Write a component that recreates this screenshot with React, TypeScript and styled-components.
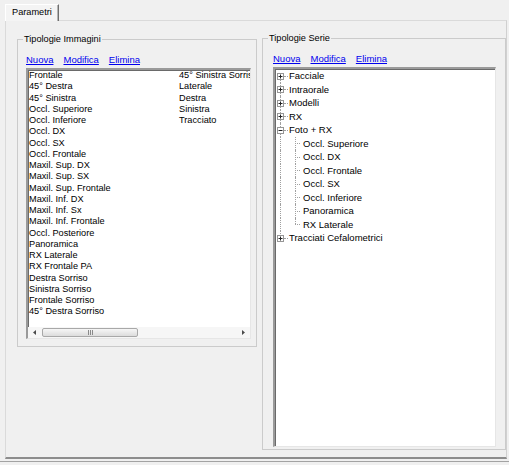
import React from 'react';
import styled, { createGlobalStyle } from 'styled-components';

const GlobalStyle = createGlobalStyle`
  html, body {
    margin: 0;
    padding: 0;
    background: #f0f0f0;
  }
  body {
    font-family: "Liberation Sans", Arial, sans-serif;
    color: #000;
  }
`;

const Window = styled.div`
  width: 509px;
  height: 465px;
  box-sizing: border-box;
  padding-top: 4px;
  background: #f0f0f0;
  overflow: hidden;
  display: flex;
  flex-direction: column;
`;

const TabStrip = styled.div`
  display: flex;
  height: 16px;
  margin-left: 5px;
  position: relative;
  z-index: 1;
`;

const Tab = styled.div`
  box-sizing: border-box;
  width: 54px;
  height: 17px;
  padding-left: 6px;
  background: #f4f4f4;
  border-top: 1px solid #ffffff;
  border-left: 1px solid #ffffff;
  border-right: 1px solid #6f6f6f;
  box-shadow: inset -1px 0 0 #b4b4b4;
  font-size: 9.2px;
  line-height: 15px;
`;

const TabPanel = styled.div`
  box-sizing: border-box;
  width: 502px;
  height: 439px;
  margin-left: 5px;
  padding: 12px 0 0 11px;
  border-style: solid;
  border-width: 1px 1px 2px 1px;
  border-color: #dadada #d0d0d0 #8d8d8d #dadada;
  display: flex;
  align-items: flex-start;
  gap: 5px;
`;

const BottomRule = styled.div`
  height: 1px;
  margin-top: 2px;
  background: #a3a3a3;
`;

const GroupBox = styled.fieldset<{ $width: number; $height: number; $padLeft: number; $shift?: number }>`
  box-sizing: border-box;
  width: ${p => p.$width}px;
  height: ${p => p.$height}px;
  margin: ${p => p.$shift ?? 0}px 0 0 0;
  padding: 9px 0 0 ${p => p.$padLeft}px;
  border: 1px solid #cbcbcb;
  min-width: 0;
  display: flex;
  flex-direction: column;
`;

const Caption = styled.legend<{ $padLeft: number }>`
  margin-left: ${p => 5 - p.$padLeft}px;
  padding: 0 1px;
  font-size: 9.2px;
  line-height: 12px;
`;

const LinkBar = styled.div`
  display: flex;
  gap: 10px;
  height: 12px;
  margin-bottom: 2px;
`;

const ActionLink = styled.a`
  font-size: 9.5px;
  line-height: 12px;
  color: #0000ee;
  text-decoration: underline;
  cursor: pointer;
`;

const SunkenBox = styled.div<{ $width: number; $height: number }>`
  box-sizing: border-box;
  width: ${p => p.$width}px;
  height: ${p => p.$height}px;
  background: #ffffff;
  border-style: solid;
  border-width: 2px 1px 1px 2px;
  border-color: #9a9a9a #e6e6e6 #e6e6e6 #9a9a9a;
  box-shadow: inset 1px 1px 0 #6a6a6a;
  display: flex;
  flex-direction: column;
  overflow: hidden;
`;

const ItemGrid = styled.ul`
  list-style: none;
  margin: 0;
  padding: 0 0 0 1px;
  flex: 1;
  display: grid;
  grid-template-rows: repeat(22, 11.25px);
  grid-auto-flow: column;
  grid-auto-columns: 150px;
  overflow: hidden;
  font-size: 9.2px;
`;

const Item = styled.li`
  line-height: 11.25px;
  white-space: nowrap;
`;

const HScroll = styled.div`
  flex: none;
  height: 11px;
  display: flex;
  align-items: center;
  background: #f6f6f6;
`;

const ScrollArrow = styled.div`
  width: 13px;
  height: 11px;
  display: flex;
  align-items: center;
  justify-content: center;
  flex: none;
`;

const Thumb = styled.div`
  box-sizing: border-box;
  width: 96px;
  height: 9px;
  margin-left: 1px;
  border: 1px solid #a8a8a8;
  border-radius: 2px;
  background: linear-gradient(#f6f6f6, #dcdcdc);
  display: flex;
  align-items: center;
  justify-content: center;
`;

const Track = styled.div`
  flex: 1;
`;

const TreeList = styled.div`
  font-size: 9.5px;
`;

const TreeRow = styled.div`
  display: flex;
  align-items: center;
  height: 13.5px;
`;

const Gutter = styled.span`
  position: relative;
  flex: none;
  width: 14px;
  height: 100%;
`;

const VLine = styled.span<{ $x: number; $top: boolean; $bottom: boolean }>`
  position: absolute;
  left: ${p => p.$x}px;
  top: ${p => (p.$top ? '0' : '50%')};
  bottom: ${p => (p.$bottom ? '0' : '50%')};
  border-left: 1px dotted #a0a0a0;
`;

const HLine = styled.span<{ $x: number; $len: number }>`
  position: absolute;
  left: ${p => p.$x}px;
  width: ${p => p.$len}px;
  top: 50%;
  border-top: 1px dotted #a0a0a0;
`;

const Expander = styled.svg<{ $x: number }>`
  position: absolute;
  left: ${p => p.$x - 3}px;
  top: calc(50% - 3px);
  display: block;
`;

const NodeLabel = styled.span`
  line-height: 13.5px;
  white-space: nowrap;
`;

const ImageTypes = [
  'Frontale', '45° Destra', '45° Sinistra', 'Occl. Superiore', 'Occl. Inferiore',
  'Occl. DX', 'Occl. SX', 'Occl. Frontale', 'Maxil. Sup. DX', 'Maxil. Sup. SX',
  'Maxil. Sup. Frontale', 'Maxil. Inf. DX', 'Maxil. Inf. Sx', 'Maxil. Inf. Frontale',
  'Occl. Posteriore', 'Panoramica', 'RX Laterale', 'RX Frontale PA', 'Destra Sorriso',
  'Sinistra Sorriso', 'Frontale Sorriso', '45° Destra Sorriso',
  '45° Sinistra Sorriso', 'Laterale', 'Destra', 'Sinistra', 'Tracciato',
];

interface SeriesNode {
  label: string;
  children?: string[];
}

const Series: SeriesNode[] = [
  { label: 'Facciale' },
  { label: 'Intraorale' },
  { label: 'Modelli' },
  { label: 'RX' },
  {
    label: 'Foto + RX',
    children: ['Occl. Superiore', 'Occl. DX', 'Occl. Frontale', 'Occl. SX', 'Occl. Inferiore', 'Panoramica', 'RX Laterale'],
  },
  { label: 'Tracciati Cefalometrici' },
];

const ExpandBox = ({ open }: { open: boolean }) => (
  <Expander $x={5} width="7" height="7" viewBox="0 0 7 7">
    <rect x="0.5" y="0.5" width="6" height="6" fill="#fff" stroke="#969696" />
    <line x1="1.5" y1="3.5" x2="5.5" y2="3.5" stroke="#222" />
    {!open && <line x1="3.5" y1="1.5" x2="3.5" y2="5.5" stroke="#222" />}
  </Expander>
);

const Actions = () => (
  <LinkBar>
    <ActionLink>Nuova</ActionLink>
    <ActionLink>Modifica</ActionLink>
    <ActionLink>Elimina</ActionLink>
  </LinkBar>
);

const App: React.FC = () => {
  const last = Series.length - 1;
  return (
    <>
      <GlobalStyle />
      <Window>
        <TabStrip>
          <Tab>Parametri</Tab>
        </TabStrip>
        <TabPanel>
          <GroupBox $width={240} $height={314} $padLeft={8}>
            <Caption $padLeft={8}>Tipologie Immagini</Caption>
            <Actions />
            <SunkenBox $width={225} $height={271}>
              <ItemGrid>
                {ImageTypes.map(t => (
                  <Item key={t}>{t}</Item>
                ))}
              </ItemGrid>
              <HScroll>
                <ScrollArrow>
                  <svg width="3" height="5" viewBox="0 0 3 5"><path d="M3 0 L0 2.5 L3 5 Z" fill="#4a4a4a" /></svg>
                </ScrollArrow>
                <Thumb>
                  <svg width="7" height="5" viewBox="0 0 7 5">
                    <path d="M1.5 0 V5 M3.5 0 V5 M5.5 0 V5" stroke="#8a8a8a" />
                  </svg>
                </Thumb>
                <Track />
                <ScrollArrow>
                  <svg width="3" height="5" viewBox="0 0 3 5"><path d="M0 0 L3 2.5 L0 5 Z" fill="#4a4a4a" /></svg>
                </ScrollArrow>
              </HScroll>
            </SunkenBox>
          </GroupBox>
          <GroupBox $width={244} $height={418} $padLeft={10} $shift={-1}>
            <Caption $padLeft={10}>Tipologie Serie</Caption>
            <Actions />
            <SunkenBox $width={223} $height={380}>
              <TreeList>
                {Series.map((n, i) => (
                  <React.Fragment key={n.label}>
                    <TreeRow>
                      <Gutter>
                        <VLine $x={5} $top={i > 0} $bottom={i < last} />
                        <HLine $x={9} $len={4} />
                        <ExpandBox open={!!n.children} />
                      </Gutter>
                      <NodeLabel>{n.label}</NodeLabel>
                    </TreeRow>
                    {n.children?.map((c, j) => (
                      <TreeRow key={c}>
                        <Gutter>
                          <VLine $x={5} $top $bottom={i < last} />
                        </Gutter>
                        <Gutter>
                          <VLine $x={6} $top $bottom={j < n.children!.length - 1} />
                          <HLine $x={6} $len={5} />
                        </Gutter>
                        <NodeLabel>{c}</NodeLabel>
                      </TreeRow>
                    ))}
                  </React.Fragment>
                ))}
              </TreeList>
            </SunkenBox>
          </GroupBox>
        </TabPanel>
        <BottomRule />
      </Window>
    </>
  );
};

export default App;
